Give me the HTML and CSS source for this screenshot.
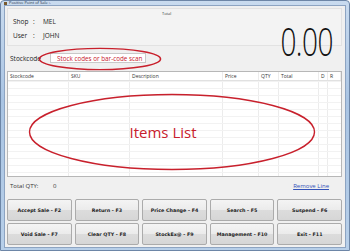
FILE: index.html
```html
<!DOCTYPE html>
<html lang="en">
<head>
    <meta charset="UTF-8">
    <title>Positive Point of Sale</title>
    <link rel="stylesheet" href="styles.css">
</head>
<body>
    <div class="window">
        <div class="titlebar">
            <span class="app-icon"></span>
            <span class="title">Positive Point of Sale :.</span>
        </div>
        <div class="client">
            <div class="top-panel">
                <div class="user-info">
                    <div class="info-row"><span class="info-label">Shop</span><span class="colon">:</span><span>MEL</span></div>
                    <div class="info-row"><span class="info-label">User</span><span class="colon">:</span><span>JOHN</span></div>
                </div>
                <div class="total-box">
                    <span class="total-label">Total</span>
                    <span class="total-value">0.00</span>
                </div>
            </div>

            <div class="stock-row">
                <label class="stock-label" for="stockcode">Stockcode</label>
                <div class="stock-field">
                    <input id="stockcode" class="stock-input" type="text" value="Stock codes or bar-code scan">
                    <svg class="ring ring-input" viewBox="0 0 124 26" preserveAspectRatio="none">
                        <ellipse cx="62" cy="13" rx="60.5" ry="11.5" fill="none" stroke="#c8202c" stroke-width="1.6"/>
                    </svg>
                </div>
            </div>

            <div class="grid">
                <div class="grid-head">
                    <span class="c-stock">Stockcode</span>
                    <span class="c-sku">SKU</span>
                    <span class="c-desc">Description</span>
                    <span class="c-price">Price</span>
                    <span class="c-qty">QTY</span>
                    <span class="c-total">Total</span>
                    <span class="c-d">D</span>
                    <span class="c-r">R</span>
                </div>
                <div class="grid-body"></div>
                <div class="items-note">
                    <svg class="ring" viewBox="0 0 290 80" preserveAspectRatio="none">
                        <ellipse cx="145" cy="40" rx="142.5" ry="37.5" fill="none" stroke="#c8202c" stroke-width="1.4"/>
                    </svg>
                    <span class="items-text">Items List</span>
                </div>
            </div>

            <div class="summary">
                <span class="qty-label">Total QTY:</span>
                <span class="qty-value">0</span>
                <a class="remove-link" href="#">Remove Line</a>
            </div>

            <div class="keys">
                <button>Accept Sale - F2</button>
                <button>Return - F3</button>
                <button>Price Change - F4</button>
                <button>Search - F5</button>
                <button>Suspend - F6</button>
                <button>Void Sale - F7</button>
                <button>Clear QTY - F8</button>
                <button>StockEx@ - F9</button>
                <button>Management - F10</button>
                <button>Exit - F11</button>
            </div>
        </div>
    </div>
</body>
</html>
```

FILE: styles.css
```css
body, html {
    margin: 0;
    padding: 0;
    width: 350px;
    height: 251px;
    overflow: hidden;
    font-family: "Open Sans", "DejaVu Sans", sans-serif;
}
.window {
    width: 350px;
    height: 251px;
    box-sizing: border-box;
    display: flex;
    flex-direction: column;
    background: linear-gradient(to bottom, #c9dbef, #a9c4e3 40%, #b7cfe9);
    border: 1px solid #6d86a7;
    border-radius: 4px 4px 0 0;
}
.titlebar {
    height: 9px;
    display: flex;
    align-items: center;
    padding-left: 3px;
    gap: 2px;
}
.app-icon {
    width: 3px;
    height: 3px;
    background-color: #7a5b2e;
}
.title {
    font-size: 4px;
    color: #1e2e44;
    line-height: 1;
}
.client {
    flex: 1;
    margin: 0 3px 4px;
    background-color: #f0f0f0;
    border: 1px solid #8da4c2;
    display: flex;
    flex-direction: column;
    padding: 2px 3px 2px 2px;
    position: relative;
}
.top-panel {
    height: 38px;
    background-color: #f3f3f3;
    border: 1px solid #e2e2e2;
    display: flex;
    justify-content: space-between;
    box-sizing: border-box;
}
.user-info {
    padding: 5px 0 0 5px;
    font-size: 6.5px;
    color: #222;
}
.info-row {
    display: flex;
    height: 14px;
    align-items: center;
}
.info-label {
    width: 20px;
}
.colon {
    width: 10px;
}
.total-box {
    width: 170px;
    position: relative;
    display: flex;
    justify-content: flex-end;
    align-items: flex-end;
    padding-right: 10px;
}
.total-label {
    position: absolute;
    left: 1px;
    top: 2px;
    font-size: 4px;
    color: #333;
}
.total-value {
    font-family: "Open Sans", "DejaVu Sans", sans-serif;
    font-weight: 300;
    font-size: 28px;
    line-height: 28px;
    color: #111;
    letter-spacing: -0.5px;
    margin-bottom: -15px;
    margin-right: -2px;
    transform: scaleY(1.38);
    transform-origin: 50% 100%;
    position: relative;
    z-index: 1;
}
.stock-row {
    height: 20px;
    margin-top: 2px;
    display: flex;
    align-items: center;
    padding-left: 3px;
    gap: 9px;
}
.stock-label {
    font-size: 6.5px;
    color: #222;
}
.stock-field {
    position: relative;
    width: 96px;
    height: 10px;
}
.stock-input {
    display: block;
    width: 100%;
    height: 100%;
    box-sizing: border-box;
    border: 1px solid #c9c9c9;
    background-color: #fff;
    padding: 0 0 0 6px;
    font-family: "Open Sans", "DejaVu Sans", sans-serif;
    font-size: 6.3px;
    line-height: 8px;
    color: #c8202c;
    margin: 0;
}
.ring {
    position: absolute;
    pointer-events: none;
}
.ring-input {
    left: -12px;
    top: -6px;
    width: 124px;
    height: 24px;
}
.grid {
    margin-top: 3px;
    height: 104px;
    background-color: #fff;
    border: 1px solid #b7b7b7;
    display: flex;
    flex-direction: column;
    position: relative;
    overflow: hidden;
}
.grid-head {
    height: 8px;
    display: flex;
    font-size: 5px;
    color: #333;
    border-bottom: 1px solid #e1e1e1;
    align-items: center;
}
.grid-head span {
    box-sizing: border-box;
    height: 100%;
    padding-left: 2px;
    border-right: 1px solid #ececec;
    display: flex;
    align-items: center;
}
.c-stock { width: 61px; }
.c-sku { width: 61px; }
.c-desc { width: 93px; }
.c-price { width: 36px; }
.c-qty { width: 20px; }
.c-total { width: 40px; }
.c-d { width: 9px; }
.c-r { flex: 1; }
.grid-body {
    flex: 1;
    background-image:
        linear-gradient(to bottom, #f2f2f2 1px, transparent 1px),
        linear-gradient(to right, transparent 60px, #ececec 60px, #ececec 61px, transparent 61px, transparent 121px, #ececec 121px, #ececec 122px, transparent 122px, transparent 214px, #ececec 214px, #ececec 215px, transparent 215px, transparent 250px, #ececec 250px, #ececec 251px, transparent 251px, transparent 270px, #ececec 270px, #ececec 271px, transparent 271px, transparent 310px, #ececec 310px, #ececec 311px, transparent 311px, transparent 319px, #ececec 319px, #ececec 320px, transparent 320px);
    background-size: 100% 7px, 100% 100%;
}
.items-note {
    position: absolute;
    left: 19px;
    top: 20px;
    width: 290px;
    height: 80px;
    display: flex;
    align-items: center;
    justify-content: center;
}
.items-note .ring {
    left: 0;
    top: 0;
    width: 100%;
    height: 100%;
}
.items-text {
    font-family: "Open Sans", "DejaVu Sans", sans-serif;
    font-size: 15px;
    color: #c8202c;
    margin-left: -18px;
}
.summary {
    height: 14px;
    margin-top: 2px;
    display: flex;
    align-items: center;
    padding-left: 3px;
    font-size: 6px;
    color: #333;
}
.qty-label {
    width: 43px;
}
.remove-link {
    margin-left: auto;
    margin-right: 13px;
    color: #3352b8;
    font-size: 6px;
}
.keys {
    margin-top: 6px;
    display: grid;
    grid-template-columns: repeat(5, 1fr);
    grid-auto-rows: 22px;
    gap: 2px 3px;
}
.keys button {
    margin: 0;
    padding: 0;
    font-family: "DejaVu Sans", sans-serif;
    font-weight: bold;
    font-size: 4.8px;
    color: #222;
    background: linear-gradient(to bottom, #f4f4f4, #ebebeb 50%, #dcdcdc 51%, #d6d6d6);
    border: 1px solid #ababab;
    border-radius: 2px;
}
```
